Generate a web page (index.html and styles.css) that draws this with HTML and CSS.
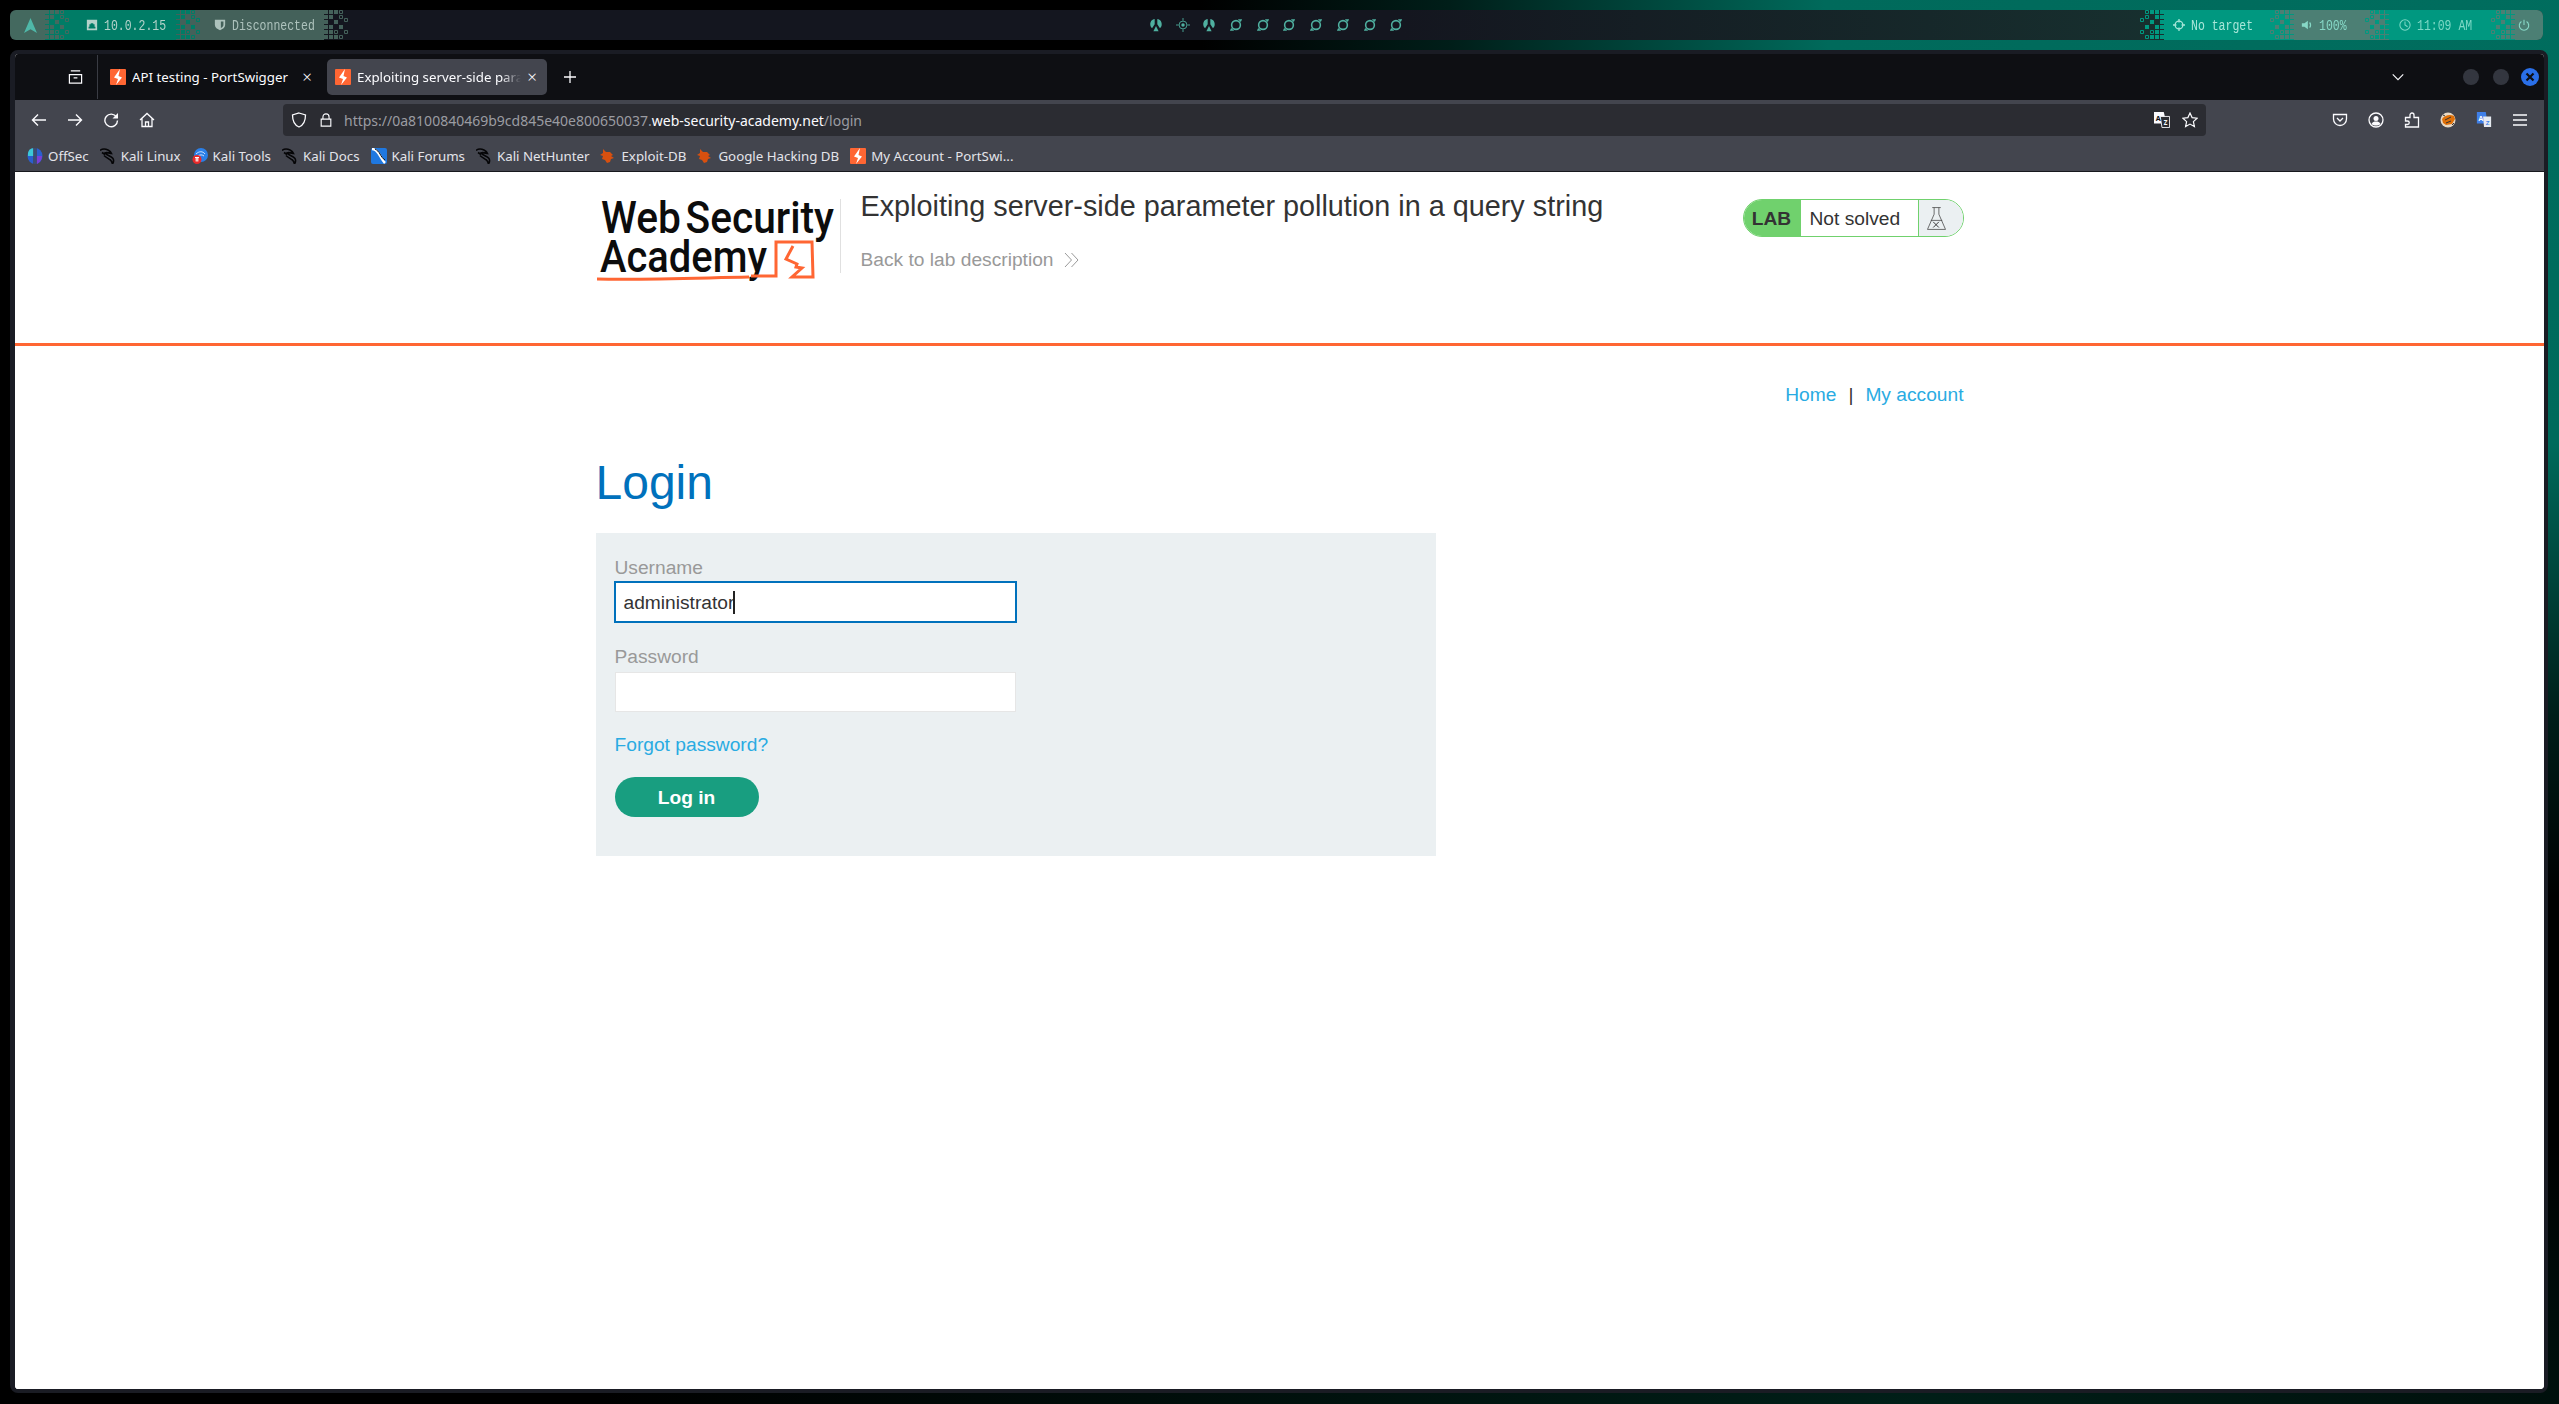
FILE: index.html
```html
<!DOCTYPE html>
<html lang="en">
<head>
    <meta charset="UTF-8">
    <title>Exploiting server-side parameter pollution in a query string</title>
    <link rel="stylesheet" href="styles.css">
</head>
<body>
    <!-- shared icons -->
    <svg class="defs" width="0" height="0">
        <symbol id="dither" viewBox="0 0 26 30">
            <path fill="currentColor" d="M0 0h4v4H0zM0 5h4v4H0zM0 10h4v4H0zM0 15h4v4H0zM0 20h4v4H0zM0 25h4v4H0zM5 0h4v4H5zM5 5h4v4H5zM5 15h4v4H5zM5 20h4v4H5zM5 25h4v4H5zM10 0h4v4h-4zM10 10h4v4h-4zM10 25h4v4h-4zM15 15h4v4h-4z"/>
            <path fill="none" stroke="currentColor" d="M15.5 5.500h3v3h-3zM15.500 25.500h3v3h-3zM20.500 8.500h3v3h-3zM10.500 20.500h3v3h-3zM20.500 20.500h3v3h-3zM15.500 0.500h3v3h-3z"/>
        </symbol>
        <symbol id="ps" viewBox="0 0 16 16">
            <rect width="16" height="16" rx="1" fill="#ff6633"/>
            <path fill="#fff" d="M10 0 4 8.500l4 1.500L6 16l6-7.500L8.500 7z"/>
        </symbol>
        <symbol id="dragon" viewBox="0 0 16 16">
            <path fill="none" stroke="#050507" stroke-width="1.600" d="M0 2.500c3-2.500 6-1.500 8-.5 2 1 3 2 3.500 3.500-2.500-.5-5-1.500-6.500-.5 2 2.500 6 3 8 5.500 1 2 .5 4-.5 5.500-.5-2-1-3-2-4-3-2-5-3-6.500-4.500M2 4.500l3 2"/>
        </symbol>
        <symbol id="swirl" viewBox="0 0 16 16">
            <circle cx="8" cy="8" r="5" fill="none" stroke="currentColor" stroke-width="1.800"/>
            <path fill="currentColor" d="M10 1.500h5l-1.500 3zM6 14.500H1l1.500-3z"/>
        </symbol>
        <symbol id="rocket" viewBox="0 0 16 16">
            <path fill="currentColor" d="M6.500 1C3 1.500 1 4.500 1.500 8c.2 1.500.8 2.700 2 3.700L6.500 7zM9.500 1c3.500.5 5.500 3.500 5 7-.2 1.500-.8 2.700-2 3.700L9.500 7zM8 9l3 6H5z"/>
        </symbol>
    </svg>

    <header class="statusbar">
        <div class="seg seg-gray">
            <svg class="arch" viewBox="0 0 14 16"><path d="M7 0l7 16-7-4-7 4z"/></svg>
        </div>
        <div class="dither d1"><svg><use href="#dither"/></svg></div>
        <div class="seg seg-teal seg-ip">
            <svg class="ico" viewBox="0 0 14 14"><path fill="currentColor" fill-rule="evenodd" d="M1 1h12v12H1zM3 9v2h8V9h-1V6H8.500V5h-3v1H4v3z"/></svg>
            <span>10.0.2.15</span>
        </div>
        <div class="dither d2"><svg><use href="#dither"/></svg></div>
        <div class="seg seg-gray2 seg-vpn">
            <svg class="ico" viewBox="0 0 14 14"><path fill="currentColor" d="M1 1h12v6c0 3-3 5-6 6-3-1-6-3-6-6z"/><path fill="#44615a" d="M8 3h3v4c0 1.500-1.500 3-3 3.500z"/></svg>
            <span>Disconnected</span>
        </div>
        <div class="dither d3"><svg><use href="#dither"/></svg></div>

        <div class="workspaces">
            <svg><use href="#rocket"/></svg>
            <svg viewBox="0 0 16 16"><circle cx="8" cy="8" r="4.500" fill="none" stroke="currentColor"/><circle cx="8" cy="8" r="2" fill="currentColor"/><path stroke="currentColor" d="M8 0v3M8 13v3M0 8h3M13 8h3"/></svg>
            <svg><use href="#rocket"/></svg>
            <svg><use href="#swirl"/></svg>
            <svg><use href="#swirl"/></svg>
            <svg><use href="#swirl"/></svg>
            <svg><use href="#swirl"/></svg>
            <svg><use href="#swirl"/></svg>
            <svg><use href="#swirl"/></svg>
            <svg><use href="#swirl"/></svg>
        </div>

        <div class="status-right">
            <div class="dither d4"><svg><use href="#dither"/></svg></div>
            <div class="seg seg-bright seg-target">
                <svg class="ico" viewBox="0 0 14 14"><circle cx="7" cy="7" r="4.500" fill="none" stroke="currentColor" stroke-width="1.500"/><path stroke="currentColor" stroke-width="1.500" d="M7 0v4M7 10v4M0 7h4M10 7h4"/></svg>
                <span>No target</span>
            </div>
            <div class="dither d5"><svg><use href="#dither"/></svg></div>
            <div class="seg seg-mute seg-vol">
                <svg class="ico" viewBox="0 0 14 14"><path fill="currentColor" d="M1 5h3l4-3v10L4 9H1z"/><path fill="none" stroke="currentColor" stroke-width="1.500" d="M10 4c1.500 1.500 1.500 4.500 0 6"/></svg>
                <span>100%</span>
            </div>
            <div class="dither d6"><svg><use href="#dither"/></svg></div>
            <div class="seg seg-bright seg-clock">
                <svg class="ico" viewBox="0 0 14 14"><circle cx="7" cy="7" r="6" fill="none" stroke="currentColor" stroke-width="1.200"/><path fill="none" stroke="currentColor" stroke-width="1.200" d="M7 3v4l3 2"/></svg>
                <span>11:09 AM</span>
            </div>
            <div class="dither d7"><svg><use href="#dither"/></svg></div>
            <div class="seg seg-mute seg-power">
                <svg class="ico" viewBox="0 0 14 14"><path fill="none" stroke="currentColor" stroke-width="1.300" d="M7 1v6M4 3a5.500 5.500 0 1 0 6 0"/></svg>
            </div>
        </div>
    </header>

    <div class="window">
        <div class="titlebar">
            <button class="tb-btn view-btn">
                <svg viewBox="0 0 16 16"><path fill="none" stroke="#fbfbfe" stroke-width="1.300" d="M3 1.500h10M1.500 5.500h13v9h-13zM6 9h4"/></svg>
            </button>
            <div class="tab-sep"></div>
            <div class="tab">
                <svg class="fav"><use href="#ps"/></svg>
                <span class="tab-title">API testing - PortSwigger</span>
                <span class="tab-close">×</span>
            </div>
            <div class="tab tab-active">
                <svg class="fav"><use href="#ps"/></svg>
                <span class="tab-title">Exploiting server-side parameter pollution in a query string</span>
                <span class="tab-close">×</span>
            </div>
            <button class="tb-btn new-tab">
                <svg viewBox="0 0 16 16"><path stroke="#fbfbfe" stroke-width="1.300" d="M8 2v12M2 8h12"/></svg>
            </button>
            <div class="win-controls">
                <svg class="tab-list" viewBox="0 0 16 16"><path fill="none" stroke="#fbfbfe" stroke-width="1.300" d="M2 5l6 6 6-6"/></svg>
                <span class="win-dot"></span>
                <span class="win-dot"></span>
                <span class="win-dot win-close">
                    <svg viewBox="0 0 10 10"><path stroke="#0e0f13" stroke-width="2.200" d="M1.500 1.500l7 7M8.500 1.500l-7 7"/></svg>
                </span>
            </div>
        </div>

        <div class="toolbar">
            <button class="tb-btn"><svg viewBox="0 0 16 16"><path fill="none" stroke="#fbfbfe" stroke-width="1.400" d="M15 8H1.500M7 2.500L1.500 8 7 13.500"/></svg></button>
            <button class="tb-btn"><svg viewBox="0 0 16 16"><path fill="none" stroke="#fbfbfe" stroke-width="1.400" d="M1 8h13.500M9 2.500L14.500 8 9 13.500"/></svg></button>
            <button class="tb-btn"><svg viewBox="0 0 16 16"><path fill="none" stroke="#fbfbfe" stroke-width="1.400" d="M13.500 5A6.300 6.300 0 1 0 14.500 8.500"/><path fill="#fbfbfe" d="M15 1v5.500H9.500z"/></svg></button>
            <button class="tb-btn"><svg viewBox="0 0 16 16"><path fill="none" stroke="#fbfbfe" stroke-width="1.300" d="M1 8l7-6.500L15 8M3 6.500V14.500h10V6.500M6.500 14.500V10h3v4.500"/></svg></button>

            <div class="urlbar">
                <svg class="url-ico" viewBox="0 0 16 16"><path fill="none" stroke="#fbfbfe" stroke-width="1.300" d="M8 1l6.500 2c0 6-1.500 10-6.500 12C3 13 1.500 9 1.500 3z"/></svg>
                <svg class="url-ico lock" viewBox="0 0 16 16"><path fill="none" stroke="#fbfbfe" stroke-width="1.300" d="M2.500 7h11v8h-11zM4.500 7V4.500a3.500 3.500 0 0 1 7 0V7"/></svg>
                <div class="url-text">https://0a8100840469b9cd845e40e800650037.<b>web-security-academy.net</b>/login</div>
                <svg class="url-ico translate" viewBox="0 0 18 18">
                    <path fill="#fbfbfe" d="M0 0h11l3 13H0z"/>
                    <path fill="#2b2c32" stroke="#fbfbfe" d="M7 5h10.500v12.500H9z"/>
                    <text class="tr-a" x="2" y="10">A</text>
                    <text class="tr-b" x="11" y="15">Z</text>
                </svg>
                <svg class="url-ico star" viewBox="0 0 16 16"><path fill="none" stroke="#fbfbfe" stroke-width="1.200" d="M8 1l2.100 4.600 5 .6-3.700 3.400 1 5L8 12.100l-4.400 2.500 1-5L.9 6.200l5-.6z"/></svg>
            </div>

            <div class="tool-icons">
                <button class="tb-btn"><svg viewBox="0 0 16 16"><path fill="none" stroke="#fbfbfe" stroke-width="1.300" d="M1.500 2.500h13V7a6.500 6.500 0 0 1-13 0zM5 6l3 3 3-3"/></svg></button>
                <button class="tb-btn"><svg viewBox="0 0 16 16"><circle cx="8" cy="8" r="7" fill="none" stroke="#fbfbfe" stroke-width="1.300"/><circle cx="8" cy="6.500" r="2.500" fill="#fbfbfe"/><path fill="#fbfbfe" d="M3.500 12c1-2 2.500-2.500 4.500-2.500s3.500.5 4.500 2.500c-2.500 2-6.500 2-9 0z"/></svg></button>
                <button class="tb-btn"><svg viewBox="0 0 16 16"><path fill="none" stroke="#fbfbfe" stroke-width="1.300" d="M1.500 9V5.500H6V3a2 2 0 0 1 4 0v2.500h4.500v9.500H1.500v-2.500h2a1.500 1.500 0 0 0 0-3.500z"/></svg></button>
                <button class="tb-btn"><svg viewBox="0 0 16 16"><circle cx="8" cy="8" r="7.500" fill="#e8d8c4"/><path fill="#e07008" d="M2 7c3-4 8-5 12-3l1 3-3 5-6 1-3-2z"/><path stroke="#333" d="M5 8l6-3M6 11l5-2M3 3l2 1M12 13l2-2"/></svg></button>
                <button class="tb-btn"><svg viewBox="0 0 18 18">
                    <path fill="#3f7fe8" d="M1 0h10l2 13H1z"/>
                    <path fill="#e6eaf0" d="M8 5h9v12H9z"/>
                    <text class="tr-a tr-white" x="2.500" y="10">A</text>
                    <text class="tr-b tr-blue" x="11" y="15">Z</text>
                </svg></button>
                <button class="tb-btn"><svg viewBox="0 0 16 16"><path stroke="#fbfbfe" stroke-width="1.300" d="M1 3h14M1 8h14M1 13h14"/></svg></button>
            </div>
        </div>

        <nav class="bookmarks">
            <a class="bm"><svg viewBox="0 0 16 16"><ellipse cx="8" cy="8" rx="7.500" ry="8" fill="#2a5fd0"/><path fill="#3cc8d8" d="M1 5c.5-3 3-5 5.500-4.800V8H1z"/><path fill="#7a3fd8" d="M9.500 8h5.500c0 4-3 7.500-5.500 8z"/><path stroke="#43454e" stroke-width="1.400" d="M7 0v16M9 0v16"/></svg>OffSec</a>
            <a class="bm"><svg><use href="#dragon"/></svg>Kali Linux</a>
            <a class="bm"><svg viewBox="0 0 16 16"><circle cx="9" cy="7" r="7" fill="#2a7fe8"/><path fill="none" stroke="#cfe4ff" d="M4 6c3-3 7-3 9 0M6 8c2-1.500 4-1.500 6 0"/><circle cx="5" cy="11.500" r="4.500" fill="#e82a2a"/><path stroke="#fff" stroke-width="1.100" d="M3 9.500h4M4.200 9.500v4M5.800 9.500v4"/></svg>Kali Tools</a>
            <a class="bm"><svg><use href="#dragon"/></svg>Kali Docs</a>
            <a class="bm"><svg viewBox="0 0 16 16"><rect width="16" height="16" rx="2" fill="#1f78e0"/><path fill="none" stroke="#fff" stroke-width="2.500" d="M1 1c3 0 5 2 7 5s3 6 6 9"/><path fill="none" stroke="#0c0c0e" d="M4 1c2 1 4 3 5 5s3 5 5 6"/></svg>Kali Forums</a>
            <a class="bm"><svg><use href="#dragon"/></svg>Kali NetHunter</a>
            <a class="bm"><svg viewBox="0 0 16 16"><path fill="#d8500f" d="M3 1l3 3h4l3 3-2 1 3 2-3 1-1 3-3 1-2-3-3-1 1-3-3-1 3-2z"/></svg>Exploit-DB</a>
            <a class="bm"><svg viewBox="0 0 16 16"><path fill="#d8500f" d="M3 1l3 3h4l3 3-2 1 3 2-3 1-1 3-3 1-2-3-3-1 1-3-3-1 3-2z"/></svg>Google Hacking DB</a>
            <a class="bm"><svg><use href="#ps"/></svg>My Account - PortSwi...</a>
        </nav>

        <div class="page">
            <div class="lab-header">
                <div class="lab-header-inner">
                    <svg class="logo" viewBox="0 0 242 92">
                        <text class="logo-text" x="5" y="38" textLength="233" lengthAdjust="spacingAndGlyphs">Web Security</text>
                        <text class="logo-text" x="4" y="77" textLength="167" lengthAdjust="spacingAndGlyphs">Academy</text>
                        <path class="logo-line thick" d="M1 84c50 1 100-1 152-2"/>
                        <path class="logo-line" d="M155 81h25V47h36l1 35h-21l10-9-6-1 1-3-11-5 7-13"/>
                    </svg>
                    <div class="logo-rule"></div>
                    <div class="lab-title">
                        <h2>Exploiting server-side parameter pollution in a query string</h2>
                        <a class="back-link">Back to lab description
                            <svg viewBox="0 0 15 14"><path fill="none" stroke="#999" d="M1 0l6.500 7L1 14M7.500 0L14 7l-6.500 7"/></svg>
                        </a>
                    </div>
                    <div class="lab-status">
                        <span class="lab-tag">LAB</span>
                        <span class="lab-state">Not solved</span>
                        <span class="lab-flask">
                            <svg viewBox="0 0 20 24"><path fill="none" stroke="#444" stroke-width=".8" d="M5.500.5h9M7.500.5v7L.5 23.500h19l-7-16v-7M4 14h12"/><path fill="none" stroke="#333" d="M6.500 15.500l6 6M12.500 15.500l-6 6"/></svg>
                        </span>
                    </div>
                </div>
            </div>

            <main class="container">
                <div class="top-links">
                    <a>Home</a>
                    <span class="pipe">|</span>
                    <a>My account</a>
                </div>
                <h1>Login</h1>
                <section class="login-panel">
                    <label>Username</label>
                    <div class="field field-focus">administrator<span class="caret"></span></div>
                    <label class="label-2">Password</label>
                    <div class="field"></div>
                    <a class="forgot">Forgot password?</a>
                    <button class="btn-login">Log in</button>
                </section>
            </main>
        </div>
    </div>
</body>
</html>
```

FILE: styles.css
```css
* {
    box-sizing: border-box;
}
html, body {
    height: 100%;
}
body {
    margin: 0;
    padding: 10px 11px 11px 10px;
    overflow: hidden;
    font-family: "Liberation Sans", Arial, sans-serif;
    background:
        radial-gradient(ellipse 1250px 900px at 2450px 0, #006d5e 0%, #006a5b 50%, rgba(0, 60, 50, 0.5) 80%, rgba(0, 0, 0, 0) 100%),
        radial-gradient(ellipse 1300px 300px at 1900px 1404px, #001f18 0%, rgba(0, 0, 0, 0) 100%),
        #000;
}
.defs {
    position: absolute;
}
button {
    border: 0;
    background: none;
    padding: 0;
}

/* top status bar */
.statusbar {
    display: flex;
    height: 30px;
    border-radius: 6px;
    overflow: hidden;
    margin-right: 5px;
    background: linear-gradient(90deg, #14161f 0%, #14161f 55%, #17302f 85%);
    font-family: "Liberation Mono", monospace;
    font-size: 11.500px;
}
.seg {
    display: flex;
    align-items: center;
    gap: 6px;
    height: 30px;
}
.seg span {
    transform: scaleY(1.250);
}
.seg .ico {
    width: 12px;
    height: 12px;
}
.seg-gray {
    width: 35px;
    padding-left: 14px;
    background: #44695f;
}
.arch {
    width: 13px;
    height: 15px;
    fill: #4fb8a8;
}
.seg-teal {
    background: #007c66;
    color: #b4d2ca;
}
.seg-gray2 {
    background: #44615a;
    color: #adc2bc;
}
.seg-bright {
    background: #009880;
    color: #a8e6d8;
}
.seg-mute {
    background: #4c7f74;
    color: #86d8c6;
}
.seg-ip {
    width: 105px;
    padding-left: 15px;
}
.seg-vpn {
    width: 122px;
    padding-left: 12px;
}
.seg-target {
    width: 104px;
    padding-left: 9px;
}
.seg-vol {
    width: 69px;
    padding-left: 7px;
}
.seg-clock {
    width: 100px;
    padding-left: 10px;
    color: #7cd8c5;
}
.seg-power {
    width: 28px;
    padding-left: 3px;
}
.dither {
    width: 26px;
    height: 30px;
    flex: none;
}
.dither svg {
    display: block;
    width: 26px;
    height: 30px;
}
.d1 { color: #44695f; background: #007c66; }
.d2 { color: #007c66; background: #44615a; }
.d3 { color: #44615a; background: transparent; }
.d4 { color: #009880; background: transparent; }
.d5 { color: #4c7f74; background: #009880; }
.d6 { color: #009880; background: #4c7f74; }
.d7 { color: #4c7f74; background: #009880; }
.d4 svg, .d5 svg, .d6 svg, .d7 svg {
    transform: scaleX(-1);
}
.workspaces {
    display: flex;
    align-items: center;
    gap: 12.700px;
    margin-left: 799px;
    color: #4fb0a0;
}
.workspaces svg {
    width: 14px;
    height: 14px;
}
.status-right {
    display: flex;
    margin-left: auto;
}

/* browser window */
.window {
    display: flex;
    flex-direction: column;
    height: 1343px;
    margin-top: 10px;
    border: solid #1a1c24;
    border-width: 4px 4px 4px 5px;
    border-radius: 8px;
    overflow: hidden;
    background: #fff;
    font-family: "Noto Sans", sans-serif;
    font-size: 13.300px;
    color: #fbfbfe;
}
.titlebar {
    display: flex;
    align-items: center;
    height: 46px;
    flex: none;
    padding-left: 42px;
    background: #0e0f13;
}
.tb-btn {
    display: flex;
    align-items: center;
    justify-content: center;
    flex: none;
    width: 36px;
    height: 32px;
}
.tb-btn svg {
    width: 16px;
    height: 16px;
}
.view-btn svg {
    width: 15px;
}
.tab-sep {
    width: 1px;
    height: 44px;
    margin: 0 4px;
    background: #3a3c44;
}
.tab {
    display: flex;
    align-items: center;
    gap: 6px;
    width: 220px;
    height: 36px;
    margin-right: 5px;
    padding: 0 10px 0 8px;
    border-radius: 5px;
}
.tab-active {
    background: #43454e;
}
.fav {
    width: 16px;
    height: 16px;
    flex: none;
}
.tab-title {
    flex: 1;
    overflow: hidden;
    white-space: nowrap;
}
.tab-active .tab-title {
    -webkit-mask-image: linear-gradient(90deg, #000 88%, transparent);
    mask-image: linear-gradient(90deg, #000 88%, transparent);
}
.tab-close {
    font-size: 17px;
    line-height: 16px;
    font-weight: 300;
}
.new-tab {
    width: 36px;
}
.win-controls {
    display: flex;
    align-items: center;
    margin-left: auto;
    padding-right: 5px;
}
.tab-list {
    width: 14px;
    height: 14px;
    margin-right: 44px;
}
.win-dot {
    display: flex;
    align-items: center;
    justify-content: center;
    width: 16px;
    height: 16px;
    margin-left: 14px;
    border-radius: 50%;
    background: #33363f;
}
.win-close {
    width: 18px;
    height: 18px;
    margin-left: 12px;
    background: #2a6fe8;
}
.win-close svg {
    width: 10px;
    height: 10px;
}

.toolbar {
    display: flex;
    align-items: center;
    height: 40px;
    flex: none;
    padding: 0 6px;
    background: #43454e;
}
.urlbar {
    display: flex;
    align-items: center;
    flex: 0 0 1923px;
    height: 32px;
    margin-left: 118px;
    padding-left: 8px;
    border-radius: 4px;
    background: #2b2c32;
    color: #9b9ca2;
}
.url-ico {
    width: 16px;
    height: 16px;
    flex: none;
}
.url-ico.lock {
    margin-left: 12px;
    width: 14px;
}
.url-text {
    margin-left: 11px;
    flex: 1;
    font-size: 14px;
    white-space: nowrap;
}
.url-text b {
    font-weight: 400;
    color: #fbfbfe;
}
.url-ico.translate {
    margin-right: 12px;
}
.url-ico.star {
    margin-right: 8px;
}
.tr-a, .tr-b {
    font-size: 8px;
    font-weight: 700;
    fill: #0e0f13;
}
.tr-b {
    fill: #fbfbfe;
    font-size: 7px;
}
.tr-white {
    fill: #fff;
}
.tr-blue {
    fill: #3f7fe8;
}
.tool-icons {
    display: flex;
    margin-left: auto;
}

.bookmarks {
    display: flex;
    align-items: center;
    gap: 11px;
    height: 32px;
    flex: none;
    padding-left: 12px;
    background: #43454e;
    border-bottom: 1px solid #17181d;
}
.bm {
    display: flex;
    align-items: center;
    gap: 5px;
    white-space: nowrap;
    color: #e4e4ea;
}
.bm svg {
    width: 16px;
    height: 16px;
}

/* lab page */
.page {
    flex: 1;
    background: #fff;
    color: #333;
    font-family: "Liberation Sans", Arial, sans-serif;
    font-size: 19.200px;
    line-height: 24px;
}
.lab-header {
    height: 174px;
    border-bottom: 3px solid #ff6633;
}
.lab-header-inner {
    display: flex;
    align-items: flex-start;
    width: 1368px;
    margin: 0 auto;
    padding-top: 23px;
}
.logo {
    width: 242px;
    height: 92px;
    flex: none;
    overflow: visible;
}
.logo-text {
    font-family: Roboto, sans-serif;
    font-size: 45px;
    font-weight: 500;
    word-spacing: -6px;
    fill: #0c0c0c;
}
.logo-line {
    fill: none;
    stroke: #ff6633;
    stroke-width: 3;
}
.logo-rule {
    width: 1px;
    height: 74px;
    margin: 4px 20px 0 2px;
    background: #e0e0e0;
}
.lab-title {
    flex: 1;
}
.lab-title h2 {
    margin: -6px 0 0;
    font-size: 28.800px;
    font-weight: 400;
    line-height: 34px;
}
.back-link {
    display: flex;
    align-items: center;
    gap: 10px;
    margin-top: 25px;
    color: #999;
}
.back-link svg {
    width: 15px;
    height: 14px;
}
.lab-status {
    display: flex;
    align-items: stretch;
    width: 221px;
    height: 38px;
    margin-top: 4px;
    border: 1px solid #70d16d;
    border-radius: 19px;
    overflow: hidden;
}
.lab-tag {
    display: flex;
    align-items: center;
    justify-content: center;
    width: 58px;
    margin-left: -1px;
    padding-top: 2px;
    background: #70d16d;
    font-weight: 700;
}
.lab-state {
    display: flex;
    align-items: center;
    width: 118px;
    padding: 1px 0 0 9px;
    border-right: 1px solid #70d16d;
}
.lab-flask {
    display: flex;
    align-items: center;
    justify-content: center;
    flex: 1;
    padding-right: 8px;
    background: #ebf0f2;
}
.lab-flask svg {
    width: 19px;
    height: 23px;
}

.container {
    width: 1368px;
    margin: 0 auto;
}
.top-links {
    display: flex;
    justify-content: flex-end;
    margin-top: 37px;
}
.top-links a {
    color: #29abe2;
}
.pipe {
    margin: 0 12px;
}
h1 {
    margin: 47px 0 21px;
    font-size: 48px;
    font-weight: 400;
    line-height: 58px;
    color: #0071bc;
}
.login-panel {
    display: flex;
    flex-direction: column;
    align-items: flex-start;
    width: 840px;
    padding: 23px 19px 39px;
    background: #ebf0f2;
}
.login-panel label {
    color: #999;
}
.field {
    display: flex;
    align-items: center;
    width: 401px;
    height: 40px;
    margin-top: 2px;
    padding-left: 9px;
    border: 1px solid #e6e6e6;
    background: #fff;
}
.field-focus {
    border: 0;
    outline: 2px solid #0071bc;
    outline-offset: -1px;
    padding-top: 1px;
}
.caret {
    width: 1.500px;
    height: 23px;
    margin-left: -1px;
    background: #222;
}
.label-2 {
    margin-top: 23px;
}
.label-2 + .field {
    margin-top: 3px;
}
.forgot {
    margin-top: 21px;
    color: #29abe2;
}
.btn-login {
    width: 144px;
    height: 40px;
    margin-top: 20px;
    padding-top: 1px;
    border-radius: 20px;
    background: #189e80;
    color: #fff;
    font: 700 19.200px "Liberation Sans", Arial, sans-serif;
}
```
